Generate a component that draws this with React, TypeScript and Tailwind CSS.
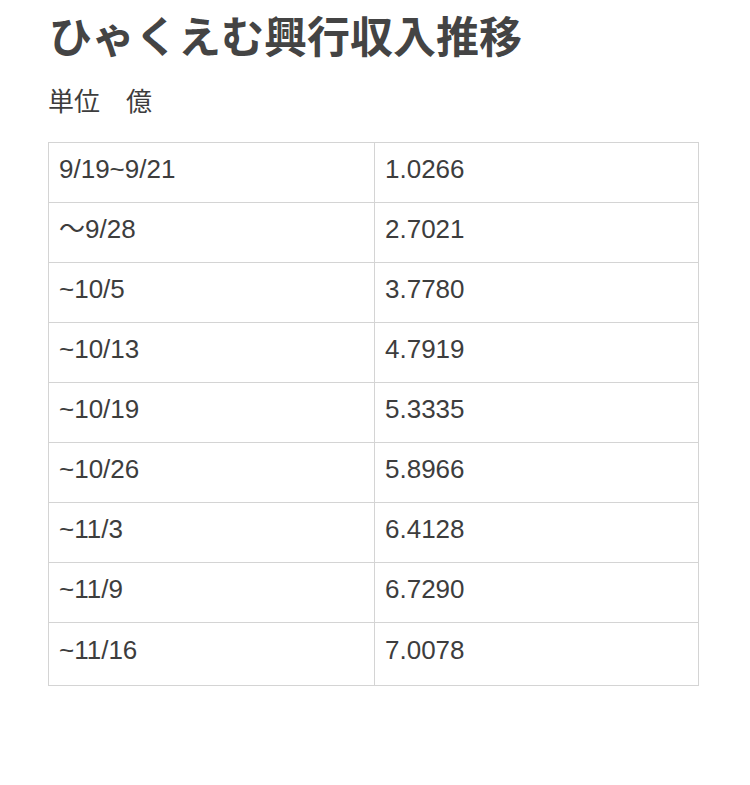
const rows: [string, string][] = [
  ["9/19~9/21", "1.0266"],
  ["〜9/28", "2.7021"],
  ["~10/5", "3.7780"],
  ["~10/13", "4.7919"],
  ["~10/19", "5.3335"],
  ["~10/26", "5.8966"],
  ["~11/3", "6.4128"],
  ["~11/9", "6.7290"],
  ["~11/16", "7.0078"],
];

export default function App() {
  return (
    <div className="w-[750px] h-[785px] bg-white text-[#3d3d3d] font-['Liberation_Sans','Noto_Sans_CJK_JP',sans-serif]">
      <div className="pl-[48px] pr-[51px] pt-[12px]">
        <h1 className="ml-[1px] text-[43px] font-bold leading-[52px] text-[#444]">
          ひゃくえむ興行収入推移
        </h1>
        <div className="mt-[20px] text-[26px] leading-[36px]">単位　億</div>
        <table className="mt-[22px] w-[651px] border-collapse text-[26px]">
          <tbody>
            {rows.map(([period, value], i) => (
              <tr
                key={period}
                className={i === rows.length - 1 ? "h-[63px]" : "h-[60px]"}
              >
                <td className="w-[326px] border border-[#d4d4d4] px-[10px] pb-[7px] align-middle">
                  {period}
                </td>
                <td className="border border-[#d4d4d4] px-[10px] pb-[7px] align-middle">
                  {value}
                </td>
              </tr>
            ))}
          </tbody>
        </table>
      </div>
    </div>
  );
}
